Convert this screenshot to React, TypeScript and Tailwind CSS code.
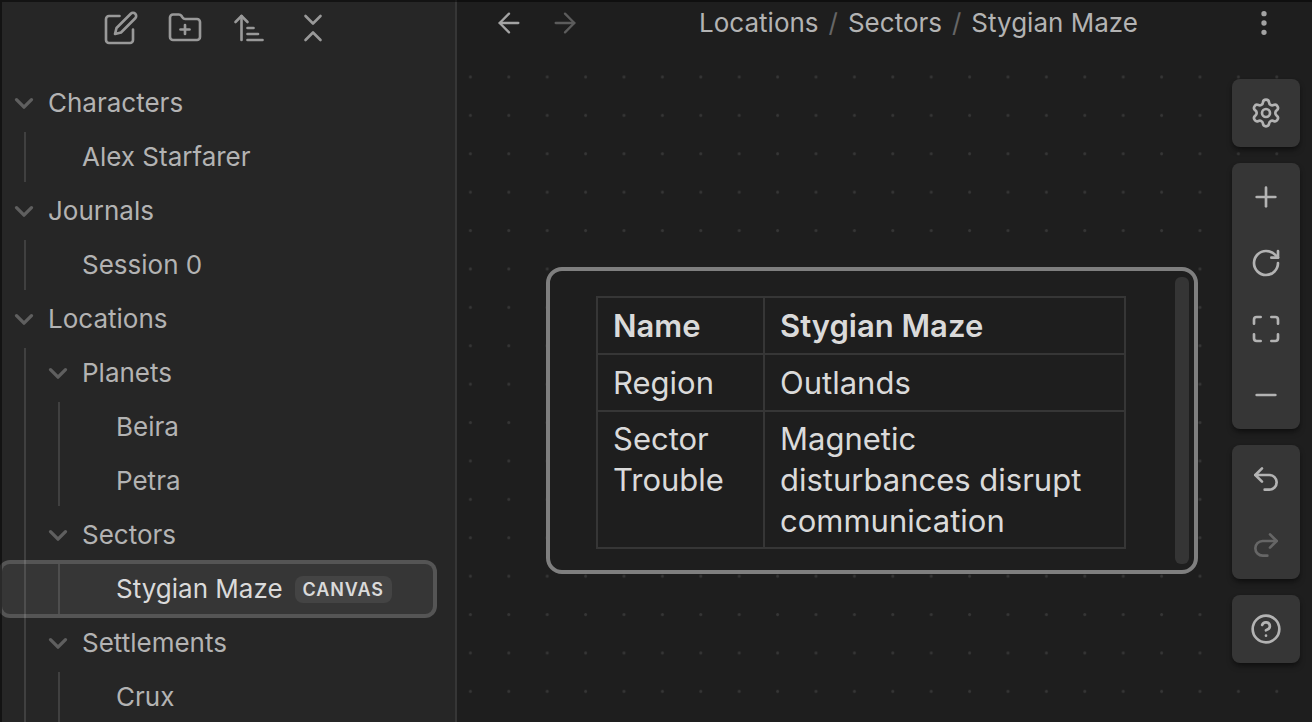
import type { ReactNode } from 'react';
import {
  ArrowLeft,
  ArrowRight,
  ArrowUpNarrowWide,
  ChevronsDownUp,
  CircleHelp,
  EllipsisVertical,
  FolderPlus,
  Maximize,
  Minus,
  Plus,
  Redo2,
  RotateCw,
  Settings,
  Undo2,
} from 'lucide-react';

type TreeItem = {
  name: string;
  tag?: string;
  selected?: boolean;
  children?: TreeItem[];
};

const tree: TreeItem[] = [
  { name: 'Characters', children: [{ name: 'Alex Starfarer' }] },
  { name: 'Journals', children: [{ name: 'Session 0' }] },
  {
    name: 'Locations',
    children: [
      { name: 'Planets', children: [{ name: 'Beira' }, { name: 'Petra' }] },
      { name: 'Sectors', children: [{ name: 'Stygian Maze', tag: 'canvas', selected: true }] },
      { name: 'Settlements', children: [{ name: 'Crux' }] },
    ],
  },
];

const folderIndent = ['pl-3', 'pl-[46px]', 'pl-20'];
const fileIndent = ['pl-[46px]', 'pl-20', 'pl-[114px]'];
const guideOffset = ['before:left-[22px]', 'before:left-14', 'before:left-[90px]'];

function EditIcon() {
  return (
    <svg
      viewBox="0 0 24 24"
      className="size-9"
      fill="none"
      stroke="currentColor"
      strokeWidth="1.75"
      strokeLinecap="round"
      strokeLinejoin="round"
      aria-hidden="true"
    >
      <path d="M11 4H4a2 2 0 0 0-2 2v14a2 2 0 0 0 2 2h14a2 2 0 0 0 2-2v-7" />
      <path d="M18.5 2.5a2.121 2.121 0 0 1 3 3L12 15l-4 1 1-4 9.5-9.5z" />
    </svg>
  );
}

function FoldIcon() {
  return (
    <svg
      viewBox="0 0 24 24"
      className="size-5 shrink-0 text-[#5f5f5f]"
      fill="none"
      stroke="currentColor"
      strokeWidth="4"
      strokeLinecap="round"
      strokeLinejoin="round"
      aria-hidden="true"
    >
      <path d="M3 8L12 17L21 8" />
    </svg>
  );
}

function Tree({ items, depth }: { items: TreeItem[]; depth: number }) {
  return (
    <>
      {items.map((item) => (
        <li key={item.name} className="flex flex-col">
          {item.children ? (
            <>
              <button
                type="button"
                aria-expanded="true"
                className={`my-0.5 flex h-[50px] items-center gap-[14px] text-left ${folderIndent[depth]}`}
              >
                <FoldIcon />
                {item.name}
              </button>
              <ul
                className={`relative flex flex-col before:absolute before:inset-y-0.5 before:z-10 before:w-0.5 before:bg-white/12 ${guideOffset[depth]}`}
              >
                <Tree items={item.children} depth={depth + 1} />
              </ul>
            </>
          ) : (
            <a
              href="#"
              aria-current={item.selected ? 'page' : undefined}
              className={`my-0.5 flex h-[50px] items-center gap-3 ${fileIndent[depth]} ${
                item.selected ? 'rounded-lg bg-[#363636] text-[#dadada] ring-4 ring-[#555555]' : ''
              }`}
            >
              {item.name}
              {item.tag && (
                <span className="rounded-lg bg-[#444444] px-2 text-lg leading-[27px] font-semibold tracking-wider uppercase">
                  {item.tag}
                </span>
              )}
            </a>
          )}
        </li>
      ))}
    </>
  );
}

function ToolButton({ label, children }: { label: string; children: ReactNode }) {
  return (
    <button type="button" aria-label={label} className="flex h-12 w-16 items-center justify-center text-[#999999]">
      {children}
    </button>
  );
}

function HeaderButton({ label, disabled, children }: { label: string; disabled?: boolean; children: ReactNode }) {
  return (
    <button
      type="button"
      aria-label={label}
      disabled={disabled}
      className="flex h-11 w-14 items-center justify-center text-[#a3a3a3] disabled:text-[#5c5c5c]"
    >
      {children}
    </button>
  );
}

function ControlGroup({ children }: { children: ReactNode }) {
  return <div className="flex flex-col rounded-lg bg-[#363636] p-px shadow-md shadow-black/40">{children}</div>;
}

function ControlButton({ label, disabled, children }: { label: string; disabled?: boolean; children: ReactNode }) {
  return (
    <button
      type="button"
      aria-label={label}
      disabled={disabled}
      className="flex size-[66px] items-center justify-center text-[#b3b3b3] disabled:text-[#666666]"
    >
      {children}
    </button>
  );
}

function DotGrid() {
  return (
    <svg className="absolute inset-0 size-full" aria-hidden="true">
      <defs>
        <pattern id="dots" x="11.8" y="15.4" width="38.4" height="38.4" patternUnits="userSpaceOnUse">
          <circle cx="1.6" cy="1.6" r="1.5" fill="#363636" />
        </pattern>
      </defs>
      <rect width="100%" height="100%" fill="url(#dots)" />
    </svg>
  );
}

function SectorCard() {
  return (
    <article className="absolute top-[207px] left-[89px] flex w-[652px] justify-between rounded-2xl border-4 border-[#7f7f7f] bg-[#1e1e1e] py-[6px] pr-[5px] pl-[46px]">
      <table className="mt-[19px] mb-[15px] w-[530px] table-fixed border-collapse text-left text-[31px] leading-[41px] text-[#dadada]">
        <thead>
          <tr className="h-[57px]">
            <th className="w-[167px] border-2 border-[#363636] px-[15px] py-[6px] font-semibold">Name</th>
            <th className="border-2 border-[#363636] px-[15px] py-[6px] font-semibold">Stygian Maze</th>
          </tr>
        </thead>
        <tbody>
          <tr className="h-[57px]">
            <td className="border-2 border-[#363636] px-[15px] py-[6px]">Region</td>
            <td className="border-2 border-[#363636] px-[15px] py-[6px]">Outlands</td>
          </tr>
          <tr className="align-top">
            <td className="border-2 border-[#363636] px-[15px] py-[6px]">Sector Trouble</td>
            <td className="border-2 border-[#363636] px-[15px] py-[6px]">Magnetic disturbances disrupt communication</td>
          </tr>
        </tbody>
      </table>
      <div className="w-[14px] rounded-md bg-[#353535]" />
    </article>
  );
}

export default function App() {
  return (
    <div className="relative flex h-screen overflow-hidden bg-[#1e1e1e] font-['Inter',sans-serif] text-[26px] leading-8 text-[#b3b3b3]">
      <aside className="flex w-[457px] shrink-0 flex-col border-r-2 border-[#363636] bg-[#262626] pl-0.5">
        <div className="flex justify-center pt-1 pr-6 pb-6">
          <ToolButton label="New note">
            <EditIcon />
          </ToolButton>
          <ToolButton label="New folder">
            <FolderPlus className="size-9" strokeWidth={1.75} />
          </ToolButton>
          <ToolButton label="Change sort order">
            <ArrowUpNarrowWide className="size-9" strokeWidth={1.75} />
          </ToolButton>
          <ToolButton label="Collapse all">
            <ChevronsDownUp className="size-9" strokeWidth={1.75} />
          </ToolButton>
        </div>
        <nav aria-label="Files" className="pr-[22px]">
          <ul className="flex flex-col">
            <Tree items={tree} depth={0} />
          </ul>
        </nav>
      </aside>

      <main className="flex min-w-0 flex-1 flex-col">
        <header className="flex h-[60px] shrink-0 items-start justify-between pt-px pr-5 pl-6">
          <div className="flex">
            <HeaderButton label="Back">
              <ArrowLeft className="size-8" strokeWidth={1.75} />
            </HeaderButton>
            <HeaderButton label="Forward" disabled>
              <ArrowRight className="size-8" strokeWidth={1.75} />
            </HeaderButton>
          </div>
          <nav aria-label="Breadcrumb" className="flex h-11 items-center gap-[10px] pl-2">
            <a href="#">Locations</a>
            <span className="text-[#666666]">/</span>
            <a href="#">Sectors</a>
            <span className="text-[#666666]">/</span>
            <span>Stygian Maze</span>
          </nav>
          <HeaderButton label="More options">
            <EllipsisVertical className="size-8" strokeWidth={2} />
          </HeaderButton>
        </header>

        <section aria-label="Canvas" className="relative flex-1">
          <DotGrid />
          <SectorCard />
          <div className="absolute top-[19px] right-3 flex flex-col gap-4">
            <ControlGroup>
              <ControlButton label="Canvas settings">
                <Settings className="size-8" />
              </ControlButton>
            </ControlGroup>
            <ControlGroup>
              <ControlButton label="Zoom in">
                <Plus className="size-8" />
              </ControlButton>
              <ControlButton label="Reset zoom">
                <RotateCw className="size-8" />
              </ControlButton>
              <ControlButton label="Zoom to fit">
                <Maximize className="size-8" />
              </ControlButton>
              <ControlButton label="Zoom out">
                <Minus className="size-8" />
              </ControlButton>
            </ControlGroup>
            <ControlGroup>
              <ControlButton label="Undo">
                <Undo2 className="size-8" />
              </ControlButton>
              <ControlButton label="Redo" disabled>
                <Redo2 className="size-8" />
              </ControlButton>
            </ControlGroup>
            <ControlGroup>
              <ControlButton label="Help">
                <CircleHelp className="size-8" />
              </ControlButton>
            </ControlGroup>
          </div>
        </section>
      </main>

      <div className="pointer-events-none absolute inset-0 z-20 border-t-2 border-l-2 border-black/50" />
    </div>
  );
}
